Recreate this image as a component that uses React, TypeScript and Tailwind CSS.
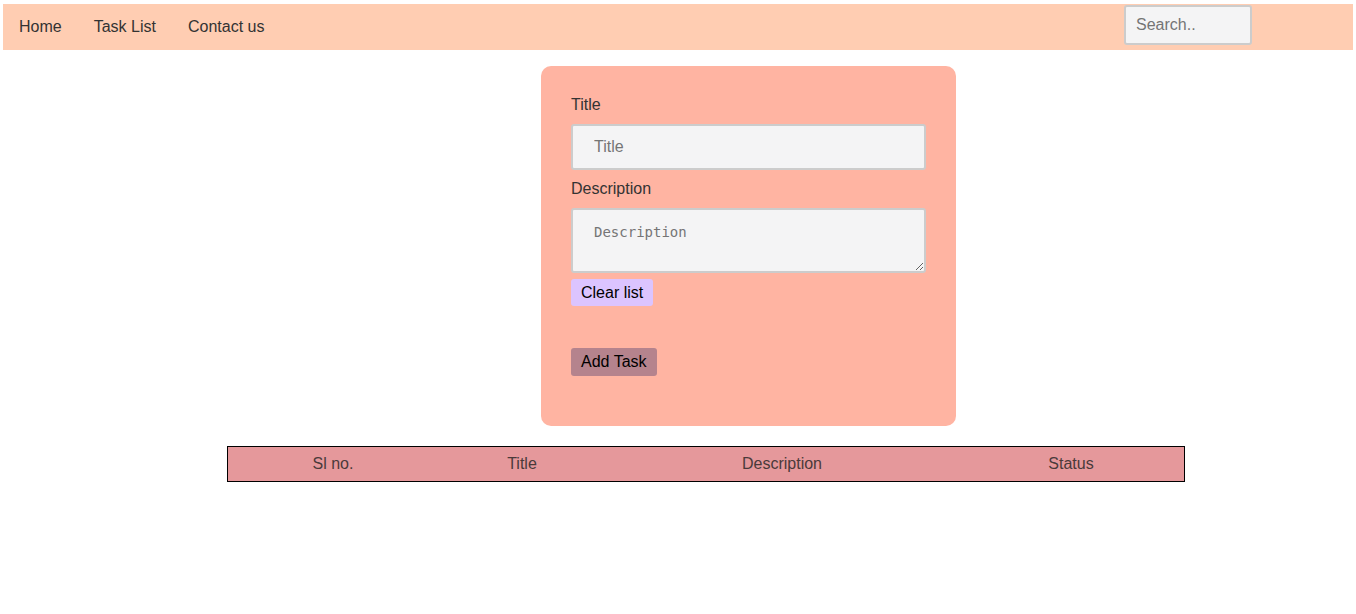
import React from "react";

export default function App() {
  const font = { fontFamily: '"Liberation Sans", Arial, sans-serif' };
  return (
    <div className="min-h-[614px] bg-white pt-1 px-[3px]" style={font}>
      <nav className="h-[46px] bg-[#FFCDB2] flex items-start text-[16px] text-[#333]">
        <a className="px-4 mt-[11px]">Home</a>
        <a className="px-4 mt-[11px]">Task List</a>
        <a className="px-4 mt-[11px]">Contact us</a>
        <div className="flex-1" />
        <input
          placeholder="Search.."
          className="w-[128px] h-[40px] mt-[1px] mr-[101px] bg-[#f4f4f5] border-2 border-[#cccccc] rounded-[3px] px-[10px] text-[16px] placeholder:text-[#757575] outline-none"
          style={font}
        />
      </nav>
      <div className="ml-[538px] mt-[16px] w-[415px] h-[360px] bg-[#FFB4A2] rounded-[10px] pt-[30px] px-[30px]">
        <label className="block text-[16px] leading-[18px] text-[#333]">Title</label>
        <input
          placeholder="Title"
          className="block mt-[10px] w-[355px] h-[46px] bg-[#f4f4f5] border-2 border-[#cccccc] rounded-[3px] pl-[21px] text-[16px] placeholder:text-[#757575] outline-none"
          style={font}
        />
        <label className="block mt-[10px] text-[16px] leading-[18px] text-[#333]">Description</label>
        <textarea
          placeholder="Description"
          className="block mt-[10px] w-[355px] h-[65px] bg-[#f4f4f5] border-2 border-[#cccccc] rounded-[3px] pl-[21px] pt-[12px] text-[14px] placeholder:text-[#757575] outline-none"
          style={{ fontFamily: '"DejaVu Sans Mono", "Liberation Mono", monospace', fontSize: 14 }}
        />
        <button className="block mt-[6px] h-[27px] px-[10px] bg-[#dcc4ff] rounded-[3px] text-[16px] text-black">Clear list</button>
        <button className="block mt-[42px] h-[28px] px-[10px] bg-[#B5838D] rounded-[3px] text-[16px] text-black">Add Task</button>
      </div>
      <div className="ml-[224px] mt-[20px] w-[958px] h-[36px] bg-[#E5989B] border border-black flex items-center text-[16px] text-[#4a3a3a]">
        <div className="w-[210px] text-center">Sl no.</div>
        <div className="w-[168px] text-center">Title</div>
        <div className="w-[352px] text-center">Description</div>
        <div className="w-[226px] text-center">Status</div>
      </div>
    </div>
  );
}
